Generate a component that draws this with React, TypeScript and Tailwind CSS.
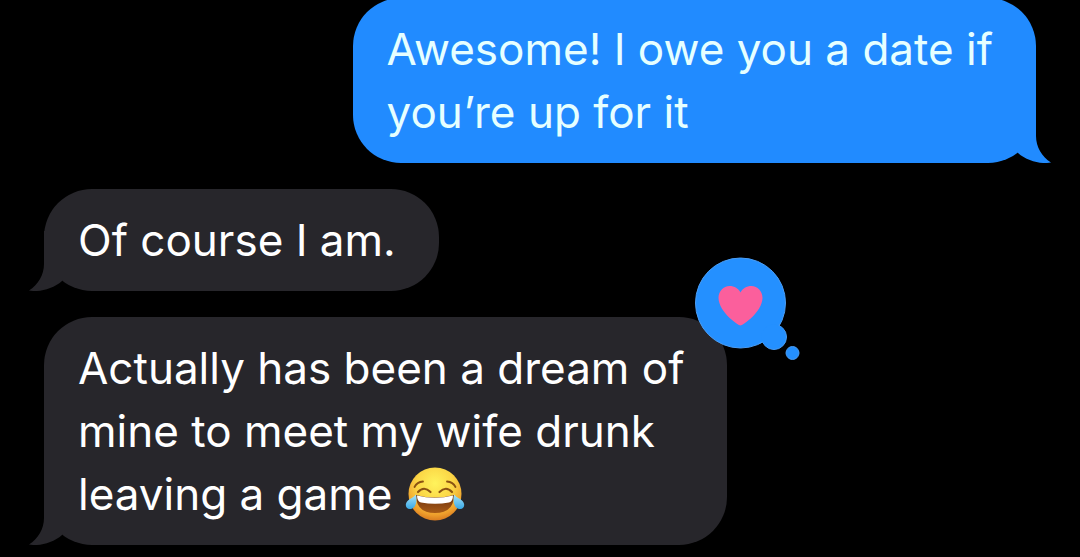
import type { ReactNode } from "react";

type Side = "sent" | "received";

function Tail({ side }: { side: Side }) {
  return (
    <svg
      viewBox="0 0 36 60"
      aria-hidden="true"
      className={
        side === "sent"
          ? "absolute bottom-0 -right-4 h-[60px] w-9 -scale-x-100 fill-[#218bff]"
          : "absolute bottom-0 -left-4 h-[60px] w-9 fill-[#27262b]"
      }
    >
      <path d="M16 0V33C16 44 10 54 1 59.500C11 61.500 25 58 34 50V0Z" />
    </svg>
  );
}

function Bubble({ side, children }: { side: Side; children: ReactNode }) {
  return (
    <div
      className={
        side === "sent"
          ? "relative w-fit self-end rounded-[48px] bg-[#218bff] pt-5 pr-[43px] pb-[19px] pl-[34px] text-[#e6ffff]"
          : "relative w-fit self-start rounded-[48px] bg-[#27262b] pt-5 pr-[43px] pb-[19px] pl-[34px] text-white"
      }
    >
      <Tail side={side} />
      {children}
    </div>
  );
}

function JoyEmoji() {
  return (
    <svg
      viewBox="0 0 60 56"
      role="img"
      aria-label="Face with tears of joy"
      className="inline-block h-14 w-[60px] align-[-12px]"
    >
      <defs>
        <radialGradient id="face" cx="0.5" cy="0.3" r="0.7">
          <stop offset="0" stopColor="#fff35c" />
          <stop offset="0.5" stopColor="#fbd545" />
          <stop offset="0.85" stopColor="#ee9e2c" />
          <stop offset="1" stopColor="#d97b20" />
        </radialGradient>
        <linearGradient id="tear" x1="0" y1="0" x2="0" y2="1">
          <stop offset="0" stopColor="#a8e4fa" />
          <stop offset="1" stopColor="#38a8e6" />
        </linearGradient>
        <linearGradient id="mouth" x1="0" y1="0" x2="0" y2="1">
          <stop offset="0" stopColor="#6b300c" />
          <stop offset="1" stopColor="#a85a16" />
        </linearGradient>
      </defs>
      <circle cx="30" cy="28" r="26.500" fill="url(#face)" />
      <g fill="none" stroke="#8a5212" strokeLinecap="round">
        <path d="M9.500 21Q12 16 18 15.500" strokeWidth="1.800" />
        <path d="M50.500 21Q48 16 42 15.500" strokeWidth="1.800" />
        <path d="M13 26Q19 19.500 25.500 26" strokeWidth="2.200" />
        <path d="M34.500 26Q41 19.500 47 26" strokeWidth="2.200" />
      </g>
      <path d="M11 29Q30 34 49 29Q49 47 30 47Q11 47 11 29Z" fill="url(#mouth)" />
      <path d="M12 29.500Q30 34 48 29.500Q48 35.500 44 36.500Q30 39 16 36.500Q12 35.500 12 29.500Z" fill="#fff" />
      <path d="M11 28.500C12.500 36 10.500 42.500 5.500 43C0.500 43.500 -0.500 38 2.500 35C5 32.500 8.500 31.500 11 28.500Z" fill="url(#tear)" />
      <path d="M49 28.500C47.500 36 49.500 42.500 54.500 43C59.500 43.500 60.500 38 57.500 35C55 32.500 51.500 31.500 49 28.500Z" fill="url(#tear)" />
    </svg>
  );
}

function HeartReaction() {
  return (
    <svg
      viewBox="0 0 108 106"
      role="img"
      aria-label="Loved"
      className="absolute -top-[61px] -right-[75px] h-[106px] w-[108px]"
    >
      <g fill="#2490ff" stroke="#4a9df5" strokeWidth="1">
        <circle cx="80" cy="81" r="12.500" />
        <circle cx="98.500" cy="97" r="6.500" />
        <circle cx="46.500" cy="47" r="45" />
      </g>
      <circle cx="79.500" cy="80.500" r="12" fill="#2490ff" />
      <path
        d="M46.500 69.500C44.500 69.500 25 56.500 24.500 42C24.500 35 29.500 30 35.500 30C40.500 30 44.500 32.500 46.500 36.500C48.500 32.500 52.500 30 57.500 30C63.500 30 68.500 35 68.500 42C68 56.500 48.500 69.500 46.500 69.500Z"
        fill="#fb5f9c"
      />
    </svg>
  );
}

export default function App() {
  return (
    <main className="flex min-h-screen flex-col gap-[26px] overflow-hidden bg-black px-11 pb-3 font-['Inter','Liberation_Sans',sans-serif] text-[44px] leading-[63px]">
      <div className="-mt-0.5 flex flex-col">
        <Bubble side="sent">
          <p>
            Awesome! I owe you a date if
            <br />
            you’re up for it
          </p>
        </Bubble>
      </div>
      <Bubble side="received">
        <p>Of course I am.</p>
      </Bubble>
      <Bubble side="received">
        <p>
          Actually has been a dream of
          <br />
          mine to meet my wife drunk
          <br />
          leaving a game <JoyEmoji />
        </p>
        <HeartReaction />
      </Bubble>
    </main>
  );
}
